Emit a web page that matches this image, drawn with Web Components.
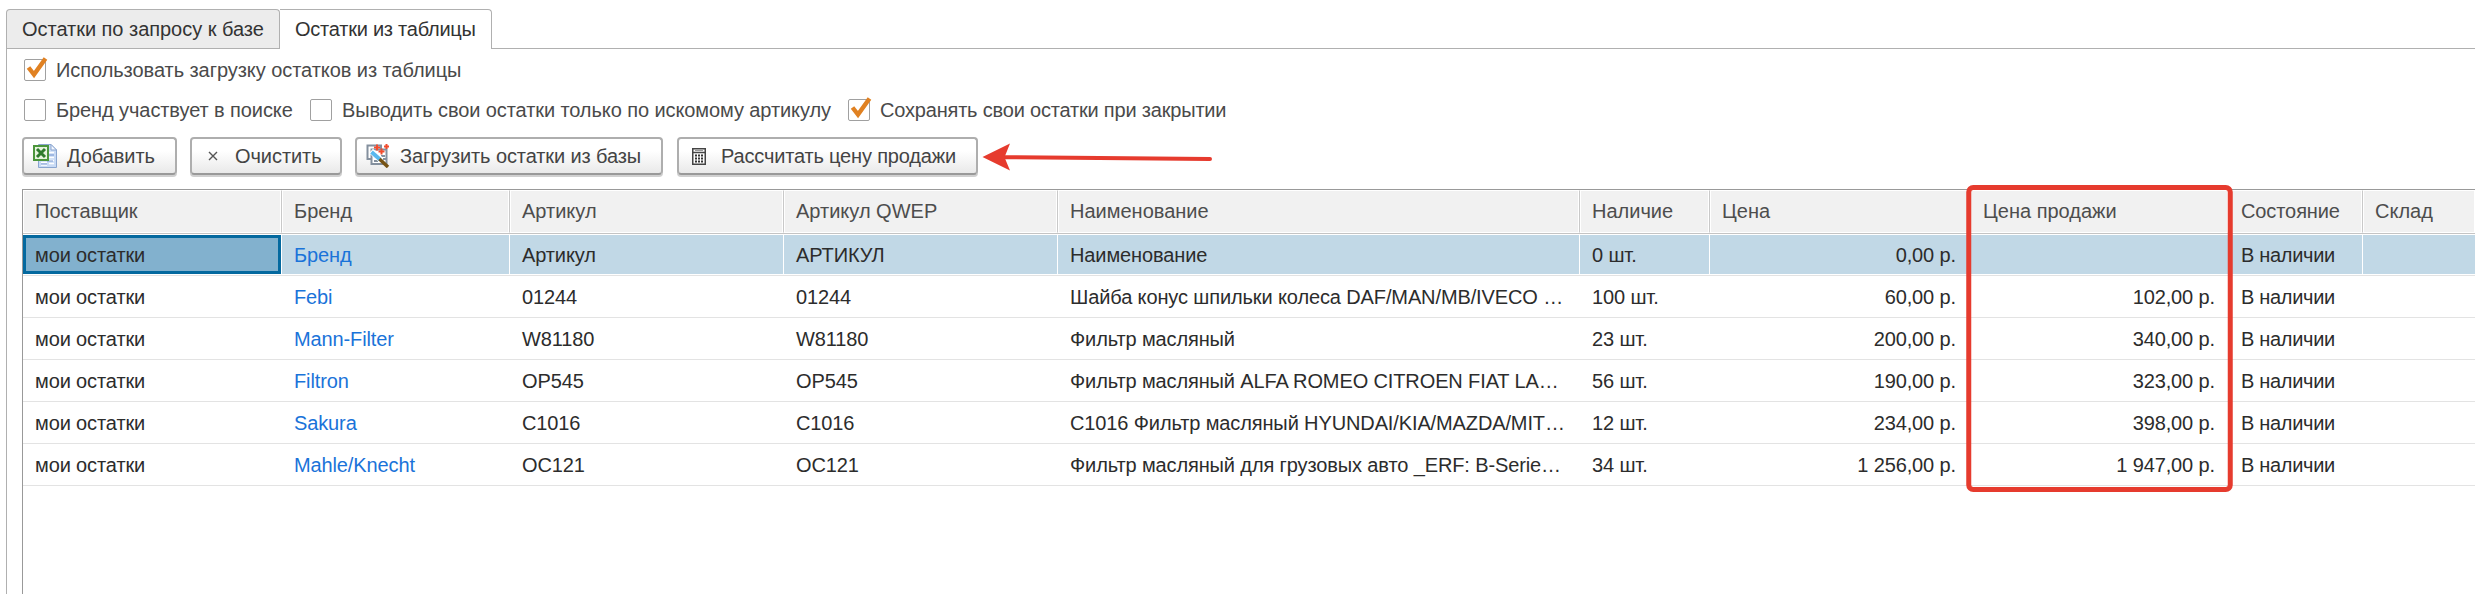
<!DOCTYPE html>
<html lang="ru">
<head>
<meta charset="utf-8">
<title>Остатки</title>
<style>
html,body{margin:0;height:100%;background:#fff;overflow:hidden}
body{font:20px/24px "Liberation Sans",Arial,sans-serif;color:#444}
</style>
</head>
<body>
<stock-page></stock-page>
<script>
const define=(name,html,setup)=>customElements.define(name,class extends HTMLElement{
  constructor(){super();this.attachShadow({mode:'open'});}
  connectedCallback(){this.shadowRoot.innerHTML=html;if(setup)setup(this,this.shadowRoot);}
});

define('stock-tab',`<style>
:host{display:block;box-sizing:border-box;height:39px;border:1px solid #b0b0b0;border-left-width:0;border-bottom:0;border-radius:0 4px 0 0;background:#ececec;color:#333;padding:7px 15px 0 15px;white-space:nowrap}
:host(:first-child){border-left-width:1px;border-radius:4px 4px 0 0;padding-left:15px}
:host([active]){background:#fff;height:40px}
</style><slot></slot>`);

define('stock-check',`<style>
:host{display:flex;align-items:center;height:22px;white-space:nowrap;color:#4a4a4a;letter-spacing:-.09px}
i{display:block;position:relative;box-sizing:border-box;width:22px;height:22px;border:1px solid #a0a0a0;border-radius:2px;background:#fff;margin-right:10px}
svg{display:none;position:absolute;left:1px;top:-4px}
:host([checked]) svg{display:block}
</style><i><svg width="24" height="24" viewBox="0 0 24 24"><path d="M2.500 11.500L8 18.500L19.500 2.500" fill="none" stroke="#e08122" stroke-width="4.400"/></svg></i><span><slot></slot></span>`);

define('stock-button',`<style>
:host{display:flex;box-sizing:border-box;align-items:center;height:38px;border:2px solid #aeaeae;border-bottom-color:#999;border-radius:4px;background:linear-gradient(#fff 35%,#e9e9e9);box-shadow:0 2px 0 #d0d0d0;white-space:nowrap;color:#444;letter-spacing:-.06px}
</style><slot name="icon"></slot><span><slot></slot></span>`);

const icons={
excel:`<svg width="24" height="24" viewBox="0 0 24 24"><path d="M5.500 .5H18L23.500 6V23.500H5.500Z" fill="#c9dbf5" stroke="#8aa5cf"/><path d="M18 .5V6H23.500Z" fill="#f5f9ff" stroke="#8aa5cf"/><path d="M8 18.500H14M8 21H14M16 8.500H21M16 13.500H21M16 16.500H21M16 19.500H21" stroke="#fff" stroke-width="1.500"/><path d="M16 11H21M8 20H14M14 17H20" stroke="#7595cf"/><rect x="1" y="2" width="14" height="14" fill="#e8f4df" stroke="#4c963c" stroke-width="2"/><path d="M4 5L12 13M12 5L4 13" stroke="#2f7b2d" stroke-width="3"/></svg>`,
cross:`<svg width="10" height="10" viewBox="0 0 10 10"><path d="M1 1L9 9M9 1L1 9" stroke="#555" stroke-width="1.400"/></svg>`,
wand:`<svg width="24" height="24" viewBox="0 0 24 24"><path d="M1.500 1.500H15V15H1.500Z" fill="#fff" stroke="#84909e" stroke-width="2"/><path d="M5.500 5.500H20.500V20H5.500Z" fill="#fff" stroke="#84909e" stroke-width="2"/><path d="M15 12H19M8 13H10M8 17H12M17 15H20" stroke="#84909e" stroke-width="2"/><path d="M5 7L14 15" stroke="#fff" stroke-width="6"/><path d="M5.500 8L14 15.500" stroke="#58b8ee" stroke-width="4"/><path d="M13.500 15L22 23" stroke="#765315" stroke-width="3.500"/><path d="M8 3.500H14M11 .5V6.500M12.500 7.500H18.500M15.500 4.500V10.500M18 2.500H23M20.500 0V5" stroke="#f14b2c" stroke-width="2"/></svg>`,
calc:`<svg width="14" height="17" viewBox="0 0 14 17"><rect x=".75" y=".75" width="12.500" height="15.500" fill="#fff" stroke="#444" stroke-width="1.500"/><path d="M1 4.500H13" stroke="#444" stroke-width="1.500"/><path d="M3 2.500H11" stroke="#999"/><path d="M3 7.500H11M3 10.500H11M3 13.500H11" stroke="#333" stroke-width="2" stroke-dasharray="2 1"/></svg>`};
define('stock-icon','<style>:host{display:block;flex:none}svg{display:block}</style><div></div>',(h,r)=>{r.querySelector('div').innerHTML=icons[h.getAttribute('name')];});

define('stock-cell',`<style>
:host{display:block;box-sizing:border-box;min-width:0;white-space:nowrap;overflow:hidden;padding:9px 13px 0 12px;color:#2c2c2c;height:41px;letter-spacing:-.12px}
:host([head]){background:#f1f1f1;color:#4d4d4d;border:1px solid #fff;border-right-color:#c9c9c9;padding:8px 10px 0 11px;height:43px;box-shadow:inset -1px 0 #fff;letter-spacing:0}
:host([head]:nth-child(8)){padding-left:13px}
:host([right]){text-align:right}
:host([right]:nth-child(8)){padding-right:14px}
:host([brand]){color:#1a73d9}
:host(:nth-child(9)){letter-spacing:-.3px}
:host([head]:nth-child(9)){letter-spacing:-.1px}
:host([sel]){background:#c1d8e6;border-right:1px solid #fff;padding:8px 12px 0 12px;height:39px}
:host([current]){background:#82b1ce;border:3px solid #04699f;padding:5px 7px 0 9px;margin-right:1px}
:host(:last-child){border-right:0}
</style><slot></slot>`);

const cols=['Поставщик','Бренд','Артикул','Артикул QWEP','Наименование','Наличие','Цена','Цена продажи','Состояние','Склад'];
const rows=[
['Бренд','Артикул','АРТИКУЛ','Наименование','0 шт.','0,00 р.',''],
['Febi','01244','01244','Шайба конус шпильки колеса DAF/MAN/MB/IVECO …','100 шт.','60,00 р.','102,00 р.'],
['Mann-Filter','W81180','W81180','Фильтр масляный','23 шт.','200,00 р.','340,00 р.'],
['Filtron','OP545','OP545','Фильтр масляный ALFA ROMEO CITROEN FIAT LA…','56 шт.','190,00 р.','323,00 р.'],
['Sakura','C1016','C1016','C1016 Фильтр масляный HYUNDAI/KIA/MAZDA/MIT…','12 шт.','234,00 р.','398,00 р.'],
['Mahle/Knecht','OC121','OC121','Фильтр масляный для грузовых авто _ERF: B-Serie…','34 шт.','1 256,00 р.','1 947,00 р.']];
define('stock-table',`<style>
:host{display:block;flex:1;border-top:1px solid #999;border-left:1px solid #999;margin-left:15px}
.row{display:grid;grid-template-columns:259px 228px 274px 274px 522px 130px 259px 260px 134px 1fr;height:41px;border-bottom:1px solid #e3e3e3}
.head{height:43px;border-color:#c4c4c4;margin-bottom:1px}
.sel{height:40px}
</style><div id="t"></div>`,(h,r)=>{
 r.getElementById('t').innerHTML='<div class="row head">'+cols.map(c=>`<stock-cell head>${c}</stock-cell>`).join('')+'</div>'+
 rows.map((x,i)=>`<div class="row${i?'':' sel'}">`+['мои остатки',...x,'В наличии',''].map((v,j)=>`<stock-cell${i?'':' sel'}${!i&&!j?' current':''}${j==1?' brand':''}${j==6||j==7?' right':''}>${v}</stock-cell>`).join('')+'</div>').join('');
});

define('stock-marks',`<style>
:host{position:absolute;left:0;top:0;width:2475px;height:594px;pointer-events:none}
svg{display:block}
</style><svg width="2475" height="594" viewBox="0 0 2475 594" fill="none" stroke="#e63b2e">
<rect x="1968.750" y="187.500" width="261.500" height="302" rx="4.500" stroke-width="5"/>
<path d="M1004 157.200L1210 159" stroke-width="4" stroke-linecap="round"/>
<path d="M982.500 157L1010 143.500L1004.500 157.200L1010 170.500Z" fill="#e63b2e" stroke="none"/></svg>`);

define('stock-page',`<style>
:host{display:flex;flex-direction:column;box-sizing:border-box;position:relative;height:100vh;padding:9px 0 0 6px}
.tabs{display:flex;align-items:flex-start;height:40px;position:relative;z-index:1;margin-bottom:-1px}
.panel{flex:1;display:flex;flex-direction:column;border:1px solid #b0b0b0;border-width:1px 0 0 1px}
.checks{display:flex;padding-left:17px;margin-top:10px}
.checks+.checks{margin-top:18px}
.bar{display:flex;padding-left:15px;margin:16px 0 14px}
</style>
<div class="tabs"><stock-tab style="width:274px;letter-spacing:-.03px">Остатки по запросу к базе</stock-tab><stock-tab active style="width:212px;letter-spacing:-.24px">Остатки из таблицы</stock-tab></div>
<div class="panel">
<div class="checks"><stock-check checked style="letter-spacing:-.06px">Использовать загрузку остатков из таблицы</stock-check></div>
<div class="checks"><stock-check style="width:286px">Бренд участвует в поиске</stock-check><stock-check style="width:538px">Выводить свои остатки только по искомому артикулу</stock-check><stock-check checked style="letter-spacing:-.19px">Сохранять свои остатки при закрытии</stock-check></div>
<div class="bar">
<stock-button style="width:155px;margin-right:13px;padding-left:9px"><stock-icon slot="icon" name="excel" style="width:34px"></stock-icon>Добавить</stock-button>
<stock-button style="width:152px;margin-right:13px;padding-left:16px"><stock-icon slot="icon" name="cross" style="width:27px"></stock-icon>Очистить</stock-button>
<stock-button style="width:308px;margin-right:14px;padding-left:9px;letter-spacing:-.1px"><stock-icon slot="icon" name="wand" style="width:34px"></stock-icon>Загрузить остатки из базы</stock-button>
<stock-button style="width:301px;padding-left:13px;letter-spacing:-.17px"><stock-icon slot="icon" name="calc" style="width:29px"></stock-icon>Рассчитать цену продажи</stock-button>
</div>
<stock-table></stock-table>
</div>
<stock-marks></stock-marks>`);
</script>
</body>
</html>
